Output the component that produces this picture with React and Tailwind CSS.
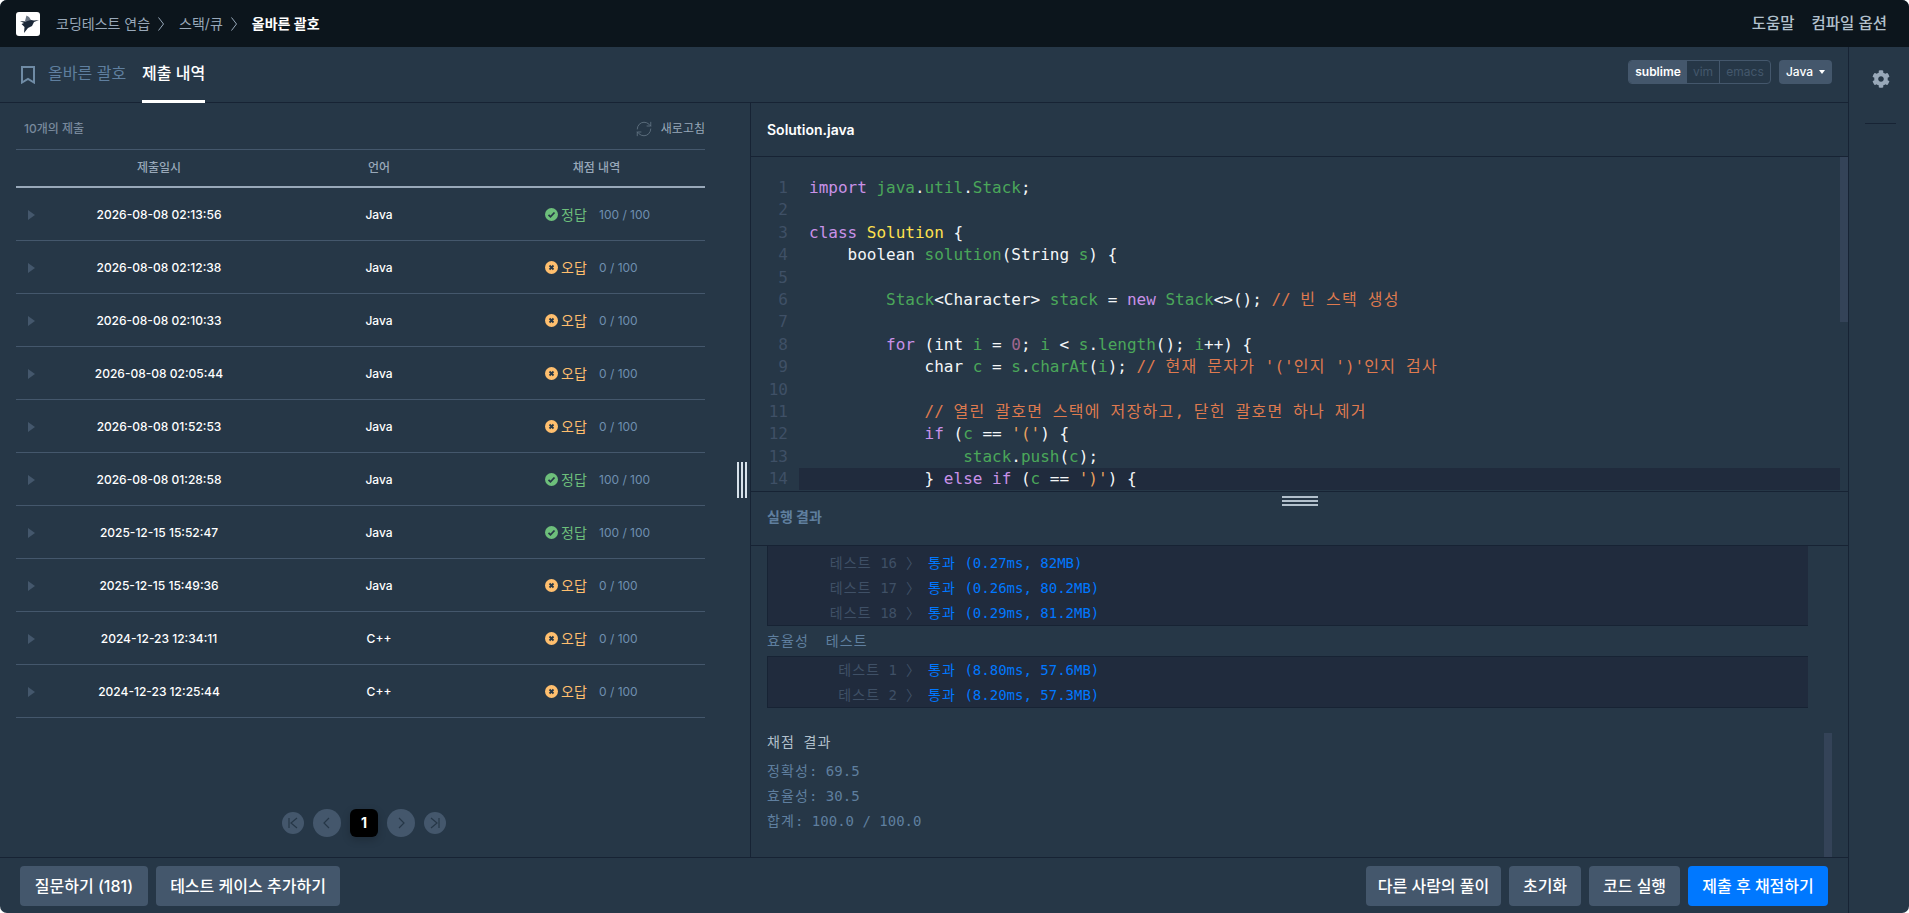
import React from "react";
import { FaCog } from "react-icons/fa";
import { RefreshCw } from "lucide-react";

const submissions = [
  ["2026-08-08 02:13:56", "Java", true, "100 / 100"],
  ["2026-08-08 02:12:38", "Java", false, "0 / 100"],
  ["2026-08-08 02:10:33", "Java", false, "0 / 100"],
  ["2026-08-08 02:05:44", "Java", false, "0 / 100"],
  ["2026-08-08 01:52:53", "Java", false, "0 / 100"],
  ["2026-08-08 01:28:58", "Java", true, "100 / 100"],
  ["2025-12-15 15:52:47", "Java", true, "100 / 100"],
  ["2025-12-15 15:49:36", "Java", false, "0 / 100"],
  ["2024-12-23 12:34:11", "C++", false, "0 / 100"],
  ["2024-12-23 12:25:44", "C++", false, "0 / 100"],
];

// token kinds: k keyword, g green, w plain, y yellow, c comment, n number, s string
const code = [
  [["k", "import"], ["w", " "], ["g", "java"], ["w", "."], ["g", "util"], ["w", "."], ["g", "Stack"], ["w", ";"]],
  [],
  [["k", "class"], ["w", " "], ["y", "Solution"], ["w", " {"]],
  [["w", "    boolean "], ["g", "solution"], ["w", "(String "], ["g", "s"], ["w", ") {"]],
  [],
  [["g", "        Stack"], ["w", "<Character> "], ["g", "stack"], ["w", " = "], ["k", "new"], ["w", " "], ["g", "Stack"], ["w", "<>(); "], ["c", "// 빈 스택 생성"]],
  [],
  [["k", "        for"], ["w", " (int "], ["g", "i"], ["w", " = "], ["n", "0"], ["w", "; "], ["g", "i"], ["w", " < "], ["g", "s"], ["w", "."], ["g", "length"], ["w", "(); "], ["g", "i"], ["w", "++) {"]],
  [["w", "            char "], ["g", "c"], ["w", " = "], ["g", "s"], ["w", "."], ["g", "charAt"], ["w", "("], ["g", "i"], ["w", "); "], ["c", "// 현재 문자가 '('인지 ')'인지 검사"]],
  [],
  [["c", "            // 열린 괄호면 스택에 저장하고, 닫힌 괄호면 하나 제거"]],
  [["k", "            if"], ["w", " ("], ["g", "c"], ["w", " == "], ["s", "'('"], ["w", ") {"]],
  [["g", "                stack"], ["w", "."], ["g", "push"], ["w", "("], ["g", "c"], ["w", ");"]],
  [["w", "            } "], ["k", "else if"], ["w", " ("], ["g", "c"], ["w", " == "], ["s", "')'"], ["w", ") {"]],
];

const tokenClass = {
  k: "text-[#c991e8]",
  g: "text-[#4ba75a]",
  w: "text-[#f4f6f8]",
  y: "text-[#ffe14d]",
  c: "text-[#df7a4f]",
  n: "text-[#a0668f]",
  s: "text-[#e9a15d]",
};

const mono = "font-['DejaVu_Sans_Mono','Noto_Sans_CJK_KR',monospace]";

// hangul in the editor font is a full em wide, the CJK fallback is a bit narrower
const Mono = ({ text }) =>
  text.split(/([가-힣]+)/).map((part, i) =>
    i % 2 ? (
      <span key={i} className="tracking-[0.08em]">{part}</span>
    ) : (
      part
    )
  );

const Chevron = () => (
  <svg width="6" height="14" viewBox="0 0 6 14" className="ml-2 mr-[15px]" fill="none" stroke="#98a8b9" strokeWidth="1">
    <path d="M.5 .5l5 6.500-5 6.500" />
  </svg>
);

const Bird = () => (
  <svg width="24" height="24" viewBox="0 0 24 24">
    <rect width="24" height="24" rx="3" fill="#fff" />
    <path d="M9 9l1.500-5.500L13 5l2 3-3 3z" fill="#6b7684" />
    <path d="M4 9l6 .5 5-1.500 3 .5 5-.5-5 2-2 4-4 2-4 5 .5-6-3-3 2.500-1z" fill="#1b2838" />
  </svg>
);

const Verdict = ({ ok }) => (
  <svg width="13" height="13" viewBox="0 0 13 13" className="mr-[3px] shrink-0">
    <circle cx="6.5" cy="6.500" r="6.500" fill={ok ? "#6dbf7b" : "#ffbf6e"} />
    {ok ? (
      <path d="M3.500 6.800l2 2 4-4.300" fill="none" stroke="#263747" strokeWidth="1.800" />
    ) : (
      <path d="M4.500 4.500l4 4M8.500 4.500l-4 4" fill="none" stroke="#263747" strokeWidth="1.800" />
    )}
  </svg>
);

const PageButton = ({ big, d }) => (
  <div className={`flex items-center justify-center rounded-full bg-[#44576c] ${big ? "h-7 w-7" : "h-[22px] w-[22px]"}`}>
    <svg width="14" height="14" viewBox="0 0 14 14" fill="none" stroke="#263747" strokeWidth="1.200">
      <path d={d} />
    </svg>
  </div>
);

const Button = ({ w, blue, children }) => (
  <button className={`flex h-10 items-center justify-center rounded-[4px] text-base font-medium text-white ${w} ${blue ? "bg-[#0078ff]" : "bg-[#44576c]"}`}>
    {children}
  </button>
);

const TestRow = ({ name, result }) => (
  <div className="flex h-[25px] items-center">
    <span className="w-[129px] text-right text-[#3f5066]"><Mono text={name} /></span>
    <span className="ml-[9px] w-[22px] text-[#3f5066]">〉</span>
    <span className="text-[#0078ff]"><Mono text={`통과 (${result})`} /></span>
  </div>
);

const App = () => {
  return (
    <div className="h-[913px] w-[1909px] overflow-hidden bg-white">
      <div className="flex h-full flex-col overflow-hidden rounded-[7px] bg-[#263747] font-['Inter','Noto_Sans_CJK_KR',sans-serif]">
        {/* top bar */}
        <header className="flex h-[47px] shrink-0 items-center justify-between bg-[#0c151c] pl-4 pr-[22px]">
          <div className="flex items-center text-sm text-[#98a8b9]">
            <Bird />
            <span className="ml-4">코딩테스트 연습</span>
            <Chevron />
            <span>스택/큐</span>
            <Chevron />
            <span className="font-bold text-white">올바른 괄호</span>
          </div>
          <div className="flex gap-[17px] text-[15.5px] font-medium text-[#b2c0cc]">
            <span>도움말</span>
            <span>컴파일 옵션</span>
          </div>
        </header>

        <div className="flex min-h-0 flex-1">
          <div className="flex w-[1848px] flex-col">
            {/* tabs */}
            <div className="flex h-[56px] shrink-0 items-center justify-between border-b border-[#172334] pl-[21px] pr-4">
              <div className="flex h-full items-center">
                <svg width="14" height="18" viewBox="0 0 14 18" fill="none" stroke="#6f8ba5" strokeWidth="2">
                  <path d="M1 1h12v15.500l-6-3.500-6 3.500z" />
                </svg>
                <span className="mb-[3px] ml-[13px] text-base text-[#5f7f9f]">올바른 괄호</span>
                <span className="relative ml-4 flex h-full items-center pb-[3px] text-base font-medium text-white">
                  제출 내역
                  <span className="absolute -bottom-px left-0 right-0 h-[3px] bg-white" />
                </span>
              </div>
              <div className="mb-[6px] flex items-center text-xs">
                <div className="flex h-6 overflow-hidden rounded-[4px] border border-[#44576c]">
                  <span className="flex w-[58px] items-center justify-center bg-[#44576c] font-semibold text-white">sublime</span>
                  <span className="flex w-[33px] items-center justify-center border-r border-[#44576c] text-[#44576c]">vim</span>
                  <span className="flex w-[50px] items-center justify-center text-[#44576c]">emacs</span>
                </div>
                <div className="ml-2 flex h-6 w-[53px] items-center justify-center gap-[6px] rounded-[4px] bg-[#44576c] font-medium text-white">
                  Java
                  <span className="mt-[1px] h-0 w-0 border-x-[3px] border-t-[4px] border-x-transparent border-t-white" />
                </div>
              </div>
            </div>

            <div className="flex min-h-0 flex-1">
              {/* submissions */}
              <div className="flex w-[750px] shrink-0">
                <div className="flex w-[705px] shrink-0 flex-col pl-4">
                  <div className="flex h-[47px] items-center justify-between border-b border-[#44576c] pl-2 pt-[5px] text-xs">
                    <span className="font-medium text-[#78899c]">10개의 제출</span>
                    <span className="flex items-center gap-2 text-[#98a8b9]">
                      <RefreshCw size={18} strokeWidth={1.2} className="text-[#5f7080]" />
                      새로고침
                    </span>
                  </div>
                  <div className="grid h-[38px] grid-cols-[32px_222px_218px_1fr] items-center border-b-2 border-[#98a8b9] pb-px text-center text-xs font-medium text-[#98a8b9]">
                    <span />
                    <span>제출일시</span>
                    <span>언어</span>
                    <span>채점 내역</span>
                  </div>
                  {submissions.map(([date, lang, ok, score]) => (
                    <div key={date} className="grid h-[53px] grid-cols-[32px_222px_218px_1fr] items-center border-b border-[#44576c] pt-px text-xs font-medium text-white">
                      <span className="ml-3 h-0 w-0 border-y-[5px] border-l-[7px] border-y-transparent border-l-[#44576c]" />
                      <span className="text-center">{date}</span>
                      <span className="text-center">{lang}</span>
                      <div className="flex items-center pl-[57px]">
                        <Verdict ok={ok} />
                        <span className={`w-[38px] text-sm font-normal ${ok ? "text-[#6dbf7b]" : "text-[#ffbf6e]"}`}>{ok ? "정답" : "오답"}</span>
                        <span className="text-xs font-normal text-[#6f8fb0]">{score}</span>
                      </div>
                    </div>
                  ))}
                  <div className="mt-[91px] flex items-center justify-center gap-[9px] pl-[7px]">
                    <PageButton d="M3 2v10M11 2L5 7l6 5" />
                    <PageButton big d="M9 2L4 7l5 5" />
                    <div className="flex h-7 w-7 items-center justify-center rounded-[6px] bg-black text-sm font-bold text-white shadow-[0_3px_8px_rgba(0,0,0,0.2)]">1</div>
                    <PageButton big d="M5 2l5 5-5 5" />
                    <PageButton d="M11 2v10M3 2l6 5-6 5" />
                  </div>
                </div>
                <div className="ml-[32px] flex h-full items-center gap-[2px]">
                  <span className="h-9 w-[2px] bg-[#d7e2eb]" />
                  <span className="h-9 w-[2px] bg-[#d7e2eb]" />
                  <span className="h-9 w-[2px] bg-[#d7e2eb]" />
                </div>
              </div>

              {/* editor + results */}
              <div className="flex min-w-0 flex-1 flex-col border-l border-[#172334]">
                <div className="flex h-[54px] shrink-0 items-center border-b border-[#172334] pl-4 text-sm font-semibold text-white">
                  Solution.java
                </div>
                <div className="flex h-[335px] shrink-0 overflow-hidden border-b border-[#172334]">
                  <div className={`flex-1 pt-5 ${mono} text-base`}>
                    {code.map((tokens, i) => (
                      <div key={i} className="flex h-[22.4px] items-center leading-[22.4px]">
                        <span className="w-[37px] text-right text-[#3f5066]">{i + 1}</span>
                        <div className={`ml-[11px] h-full flex-1 whitespace-pre pl-[10px] ${i === 13 ? "bg-[#202b3d]" : ""}`}>
                          {tokens.map(([kind, text], j) => (
                            <span key={j} className={tokenClass[kind]}><Mono text={text} /></span>
                          ))}
                        </div>
                      </div>
                    ))}
                  </div>
                  <div className="w-2">
                    <div className="h-[165px] bg-[#344358]" />
                  </div>
                </div>

                <div className="flex h-[54px] shrink-0 flex-col border-b border-[#172334] pl-4">
                  <div className="flex flex-col items-end gap-[2px] pr-[530px] pt-[4px]">
                    <span className="h-[2px] w-9 bg-[#b2c0cc]" />
                    <span className="h-[2px] w-9 bg-[#b2c0cc]" />
                    <span className="h-[2px] w-9 bg-[#b2c0cc]" />
                  </div>
                  <span className="mt-[1px] text-sm font-bold text-[#5f7f9f]">실행 결과</span>
                </div>

                <div className={`flex min-h-0 flex-1 overflow-hidden pl-4 text-sm ${mono}`}>
                  <div className="w-[1041px] shrink-0">
                    <div className="h-[80px] border-b border-l border-[#172334] bg-[#202b3d] pt-[4px]">
                      <TestRow name="테스트 16" result="0.27ms, 82MB" />
                      <TestRow name="테스트 17" result="0.26ms, 80.2MB" />
                      <TestRow name="테스트 18" result="0.29ms, 81.2MB" />
                    </div>
                    <div className="whitespace-pre leading-[30px] text-[#5f7f9f]"><Mono text="효율성  테스트" /></div>
                    <div className="h-[52px] border border-r-0 border-[#172334] bg-[#202b3d]">
                      <TestRow name="테스트 1" result="8.80ms, 57.6MB" />
                      <TestRow name="테스트 2" result="8.20ms, 57.3MB" />
                    </div>
                    <div className="mt-[22px] leading-[24px] text-[#b2c0cc]"><Mono text="채점 결과" /></div>
                    <div className="mt-[5px] whitespace-pre leading-[25px] text-[#5f7f9f]"><Mono text="정확성: 69.5" /></div>
                    <div className="whitespace-pre leading-[25px] text-[#5f7f9f]"><Mono text="효율성: 30.5" /></div>
                    <div className="whitespace-pre leading-[25px] text-[#5f7f9f]"><Mono text="합계: 100.0 / 100.0" /></div>
                  </div>
                  <div className="ml-4 w-2 pt-[187px]">
                    <div className="h-[124px] bg-[#344358]" />
                  </div>
                </div>
              </div>
            </div>

            {/* footer */}
            <div className="flex h-[56px] shrink-0 items-start justify-between border-t border-[#172334] pl-5 pr-5 pt-2">
              <div className="flex gap-2">
                <Button w="w-[128px]">질문하기 (181)</Button>
                <Button w="w-[184px]">테스트 케이스 추가하기</Button>
              </div>
              <div className="flex gap-2">
                <Button w="w-[135px]">다른 사람의 풀이</Button>
                <Button w="w-[72px]">초기화</Button>
                <Button w="w-[91px]">코드 실행</Button>
                <Button w="w-[140px]" blue>제출 후 채점하기</Button>
              </div>
            </div>
          </div>

          {/* settings rail */}
          <div className="flex flex-1 flex-col items-center border-l border-[#172334] pl-[3px] pt-[23px]">
            <FaCog size={18} className="text-[#98a8b9]" />
            <span className="mt-[35px] h-px w-[31px] bg-[#172334]" />
          </div>
        </div>
      </div>
    </div>
  );
};

export default App;
